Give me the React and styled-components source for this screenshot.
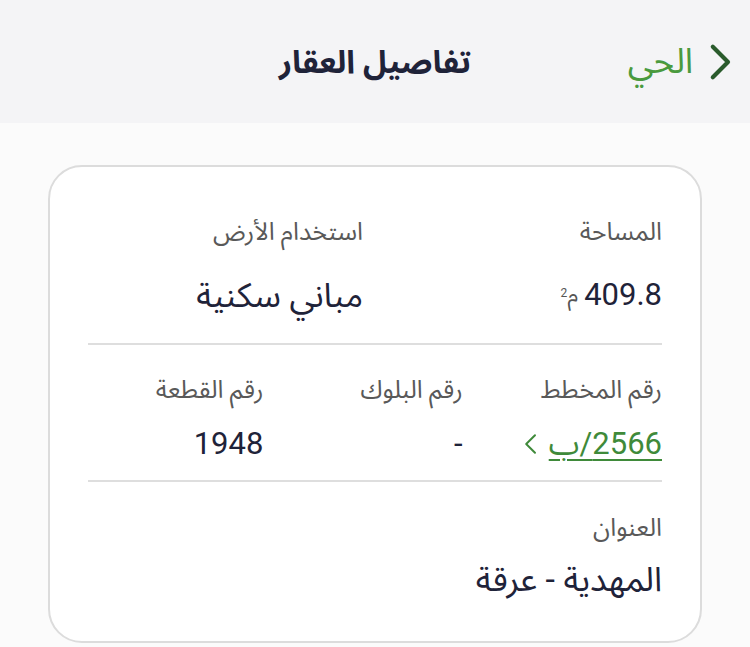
import React from "react";
import styled, { createGlobalStyle } from "styled-components";

const Global = createGlobalStyle`
  html, body { margin: 0; padding: 0; background: #fbfbfb; }
  body { font-family: "Roboto", "Noto Sans Arabic", "DejaVu Sans", sans-serif; direction: rtl; }
`;

const Page = styled.div`
  width: 750px;
  min-height: 647px;
  background: #fbfbfb;
`;

const Header = styled.header`
  height: 123px;
  background: #f4f4f6;
  display: grid;
  grid-template-columns: 1fr auto 1fr;
  align-items: center;
  padding: 0 18px;
  box-sizing: border-box;
`;

const Back = styled.div`
  display: flex;
  align-items: center;
  gap: 16px;
  color: #4a9a3e;
  font-size: 35px;
  line-height: 40px;
`;

const Title = styled.h1`
  margin: 0;
  font-size: 32px;
  line-height: 40px;
  font-weight: 700;
  color: #1f2339;
`;

const Card = styled.section`
  margin: 42px 48px 0 48px;
  background: #fff;
  border: 2px solid #dcdcdc;
  border-radius: 34px;
  padding: 0 38px;
  height: 478px;
  box-sizing: border-box;
`;

const Section = styled.div`
  display: grid;
  grid-template-columns: repeat(${(p) => p.cols}, 1fr);
  column-gap: 24px;
  padding: ${(p) => p.pt}px 0 ${(p) => p.pb}px;
  border-top: ${(p) => (p.divider ? "2px solid #dedede" : "none")};
`;

const Field = styled.div`
  display: flex;
  flex-direction: column;
  gap: ${(p) => p.gap}px;
`;

const Label = styled.div`
  font-size: 25px;
  line-height: 30px;
  color: #595959;
`;

const Value = styled.div`
  font-size: ${(p) => (p.arabic ? 34 : 31)}px;
  line-height: 36px;
  color: #1f2339;
  display: flex;
  align-items: center;
  gap: ${(p) => p.gap || 6}px;
`;

const Unit = styled.span`
  font-size: 22px;
  color: #555;
  position: relative;
  sup {
    font-size: 12px;
    position: absolute;
    top: -2px;
    left: -7px;
  }
`;

const Link = styled.a`
  color: #3f8a3a;
  text-decoration: underline;
  text-underline-offset: 5px;
  text-decoration-thickness: 2px;
`;

const Chev = ({ dir, size = 20, color, stroke = 2 }) => (
  <svg width={size * 0.6} height={size} viewBox="0 0 12 20" fill="none">
    <path
      d={dir === "right" ? "M2 2 L10 10 L2 18" : "M10 2 L2 10 L10 18"}
      stroke={color}
      strokeWidth={stroke}
      strokeLinecap="round"
      strokeLinejoin="round"
    />
  </svg>
);

export default function App() {
  return (
    <Page>
      <Global />
      <Header>
        <Back>
          <Chev dir="right" size={38} color="#2a5b2c" stroke={2.2} />
          <span>الحي</span>
        </Back>
        <Title>تفاصيل العقار</Title>
        <div />
      </Header>
      <Card>
        <Section cols={2} pt={50} pb={30}>
          <Field gap={30}>
            <Label>المساحة</Label>
            <Value>
              <span>409.8</span>
              <Unit>
                م<sup>2</sup>
              </Unit>
            </Value>
          </Field>
          <Field gap={30}>
            <Label>استخدام الأرض</Label>
            <Value arabic>مباني سكنية</Value>
          </Field>
        </Section>
        <Section cols={3} pt={30} pb={18} divider>
          <Field gap={21}>
            <Label>رقم المخطط</Label>
            <Value gap={12}>
              <Link>2566/ب</Link>
              <Chev dir="left" size={22} color="#3f8a3a" stroke={1.8} />
            </Value>
          </Field>
          <Field gap={21}>
            <Label>رقم البلوك</Label>
            <Value>-</Value>
          </Field>
          <Field gap={21}>
            <Label>رقم القطعة</Label>
            <Value>1948</Value>
          </Field>
        </Section>
        <Section cols={1} pt={31} pb={40} divider>
          <Field gap={18}>
            <Label>العنوان</Label>
            <Value arabic>المهدية - عرقة</Value>
          </Field>
        </Section>
      </Card>
    </Page>
  );
}
